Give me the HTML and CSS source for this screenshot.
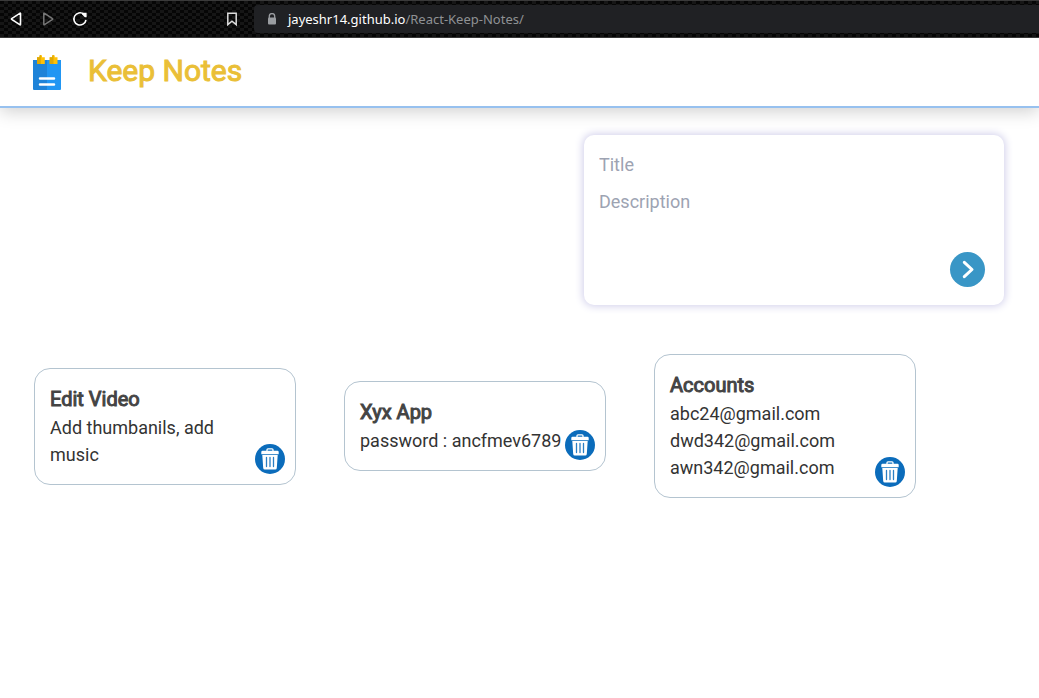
FILE: index.html
```
<!DOCTYPE html>
<html lang="en">
<head>
<meta charset="utf-8">
<meta name="viewport" content="width=device-width, initial-scale=1">
<title>Keep Notes</title>
<link rel="stylesheet" href="styles.css">
</head>
<body>
<svg class="symbols" aria-hidden="true">
  <symbol id="trash" viewBox="0 0 30 30">
    <circle cx="15" cy="15" r="15" fill="#0b6cbb"/>
    <path d="M12 7V5.8Q12 4.8 13 4.8H17Q18 4.8 18 5.8V7" fill="none" stroke="#fff" stroke-width="1.3"/>
    <path d="M7.5 6.8H22.5Q23.7 6.8 23.7 8V10.3H6.3V8Q6.3 6.8 7.5 6.8Z" fill="#fff"/>
    <path d="M7.3 11H22.7L21.8 24Q21.7 25.5 20.2 25.5H9.8Q8.3 25.5 8.2 24Z" fill="#fff"/>
    <path d="M11.5 13.5V22.5M15 13.5V22.5M18.5 13.5V22.5" stroke="#2b7fc4" stroke-width="1.3" stroke-linecap="round"/>
  </symbol>
</svg>

<nav class="browser" aria-label="Browser">
  <div class="browser-tools">
    <button class="tool" type="button" aria-label="Back"><svg width="16" height="16" viewBox="0 0 16 16"><path d="M12.5 2.4V13.6Q12.5 14 12.1 13.8L3.7 8.4Q3.2 8 3.7 7.6L12.1 2.2Q12.5 2 12.5 2.4Z" fill="none" stroke="#fff" stroke-width="1.6"/></svg></button>
    <button class="tool" type="button" aria-label="Forward"><svg width="16" height="16" viewBox="0 0 16 16"><path d="M3.8 2.4V13.6Q3.8 14 4.2 13.8L12.5 8.4Q13 8 12.5 7.6L4.2 2.2Q3.8 2 3.8 2.4Z" fill="none" stroke="#777" stroke-width="1.5"/></svg></button>
    <button class="tool" type="button" aria-label="Reload"><svg width="16" height="16" viewBox="0 0 16 16"><path d="M11.8 3.2A6.1 6.1 0 1 0 14 9" fill="none" stroke="#fff" stroke-width="1.5"/><path d="M10.2 1.8H14.6V6.2H12.8L10.2 3.6Z" fill="#fff"/></svg></button>
    <button class="tool tool-bookmark" type="button" aria-label="Bookmark"><svg width="16" height="16" viewBox="0 0 16 16"><path d="M3.8 2.3H12.2V13.6L8 10.2L3.8 13.6Z" fill="none" stroke="#ddd" stroke-width="1.5"/></svg></button>
  </div>
  <div class="address">
    <svg width="10" height="12" viewBox="0 0 10 12" aria-hidden="true"><path d="M2.3 5V3.3A2.7 2.7 0 0 1 7.7 3.3V5" fill="none" stroke="#9a9da1" stroke-width="1.3"/><rect x="1" y="4.6" width="8" height="7" rx="1" fill="#9a9da1"/></svg>
    <a class="url" href="#"><span class="host">jayeshr14.github.io</span>/React-Keep-Notes/</a>
  </div>
</nav>

<header class="header">
  <svg class="logo" width="30" height="36" viewBox="0 0 30 36" aria-hidden="true">
    <path d="M1 5H15V35H2Q1 35 1 34Z" fill="#1e83d8"/>
    <path d="M15 5H29V34Q29 35 28 35H15Z" fill="#2196f3"/>
    <path d="M5 2.2H7.5V1Q7.5 0 8.8 0Q10 0 10 1V2.2H12.8V9H5Z" fill="#ffc107"/>
    <path d="M5 2.2H7.5V1Q7.5 0 8.8 0V9H5Z" fill="#dea806"/>
    <path d="M17.7 2.2H20.2V1Q20.2 0 21.5 0Q22.7 0 22.7 1V2.2H25.5V9H17.7Z" fill="#ffc107"/>
    <path d="M17.7 2.2H20.2V1Q20.2 0 21.5 0V9H17.7Z" fill="#dea806"/>
    <path d="M8 23.5H22M8 29.5H22" stroke="#fff" stroke-width="2.5" stroke-linecap="round"/>
  </svg>
  <h1 class="brand">Keep Notes</h1>
</header>

<main>
  <form class="composer">
    <input class="field" type="text" placeholder="Title" aria-label="Title">
    <textarea class="field field-text" placeholder="Description" aria-label="Description"></textarea>
    <button class="add" type="button" aria-label="Add note"><svg width="35" height="35" viewBox="0 0 35 35"><path d="M14.3 10.3L22 17.5L14.3 24.7" fill="none" stroke="#fff" stroke-width="3" stroke-linecap="round" stroke-linejoin="round"/></svg></button>
  </form>

  <section class="notes" aria-label="Notes">
    <article class="note">
      <h2 class="note-title">Edit Video</h2>
      <p class="note-text">Add thumbanils, add music</p>
      <button class="delete" type="button" aria-label="Delete Edit Video"><svg width="30" height="30"><use href="#trash"/></svg></button>
    </article>
    <article class="note">
      <h2 class="note-title">Xyx App</h2>
      <p class="note-text">password : ancfmev6789</p>
      <button class="delete" type="button" aria-label="Delete Xyx App"><svg width="30" height="30"><use href="#trash"/></svg></button>
    </article>
    <article class="note">
      <h2 class="note-title">Accounts</h2>
      <p class="note-text">abc24@gmail.com<br>dwd342@gmail.com<br>awn342@gmail.com</p>
      <button class="delete" type="button" aria-label="Delete Accounts"><svg width="30" height="30"><use href="#trash"/></svg></button>
    </article>
  </section>
</main>
</body>
</html>
```
FILE: styles.css
```
* { box-sizing: border-box; }

body {
  margin: 0;
  background: #fff;
  color: #333;
  font-family: Roboto, sans-serif;
  font-size: 18px;
}

h1, h2, p { margin: 0; }

button {
  border: 0;
  padding: 0;
  background: none;
  cursor: pointer;
}

svg { display: block; }

.symbols {
  position: absolute;
  width: 0;
  height: 0;
}

/* Browser bar */
.browser {
  display: flex;
  align-items: center;
  height: 38px;
  border-top: 1px solid #3a3a3a;
  border-bottom: 1px solid #3a3a3a;
  background: repeating-conic-gradient(#161616 0 25%, #060606 0 50%) 0 0 / 8px 6px;
}

.browser-tools {
  display: flex;
  gap: 16px;
  width: 254px;
  padding: 0 14px 0 8px;
}

.tool-bookmark { margin-left: auto; }

.address {
  display: flex;
  flex: 1;
  align-items: center;
  gap: 11px;
  height: 28px;
  padding-left: 13px;
  border-radius: 4px 0 0 4px;
  background: #202124;
}

.url {
  color: #8f9194;
  font-family: "Noto Sans", "Open Sans", sans-serif;
  font-size: 13px;
  text-decoration: none;
}

.host { color: #fff; }

/* Page header */
.header {
  display: flex;
  align-items: center;
  gap: 26px;
  height: 70px;
  padding: 2px 32px 0;
  border-bottom: 2px solid #97c1ef;
  box-shadow: 0 4px 16px rgba(0, 0, 0, 0.18);
}

.brand {
  color: #eabf37;
  font-size: 30px;
  font-weight: 400;
  line-height: 30px;
  padding-bottom: 4px;
  -webkit-text-stroke: 1px #eabf37;
}

/* New note form */
.composer {
  position: relative;
  width: 420px;
  max-width: calc(100% - 70px);
  height: 170px;
  margin: 27px 35px 0 auto;
  padding: 16px 15px;
  border-radius: 10px;
  background: #fff;
  box-shadow: 0 0 8px 1px #cfcdea;
}

.field {
  display: block;
  width: 100%;
  height: 28px;
  margin-bottom: 9px;
  padding: 0;
  border: 0;
  outline: 0;
  background: none;
  color: #333;
  font: 18px/28px Roboto, sans-serif;
}

.field::placeholder { color: #9da3b2; opacity: 1; }

.field-text {
  height: 90px;
  margin: 0;
  resize: none;
}

.add {
  position: absolute;
  right: 19px;
  bottom: 18px;
  border-radius: 50%;
  background: #3996c6;
}

/* Notes */
.notes {
  display: flex;
  flex-wrap: wrap;
  align-items: center;
  gap: 48px;
  padding: 49px 34px;
}

.note {
  position: relative;
  width: 262px;
  padding: 15px 40px 16px 15px;
  border: 1px solid #b4c4d0;
  border-radius: 16px;
}

.note-title {
  color: #444;
  font-size: 20px;
  font-weight: 400;
  line-height: 30px;
  -webkit-text-stroke: 1px #444;
}

.note-text {
  font-weight: 400;
  line-height: 27px;
}

.delete {
  position: absolute;
  right: 10px;
  bottom: 10px;
  border-radius: 50%;
}
```
